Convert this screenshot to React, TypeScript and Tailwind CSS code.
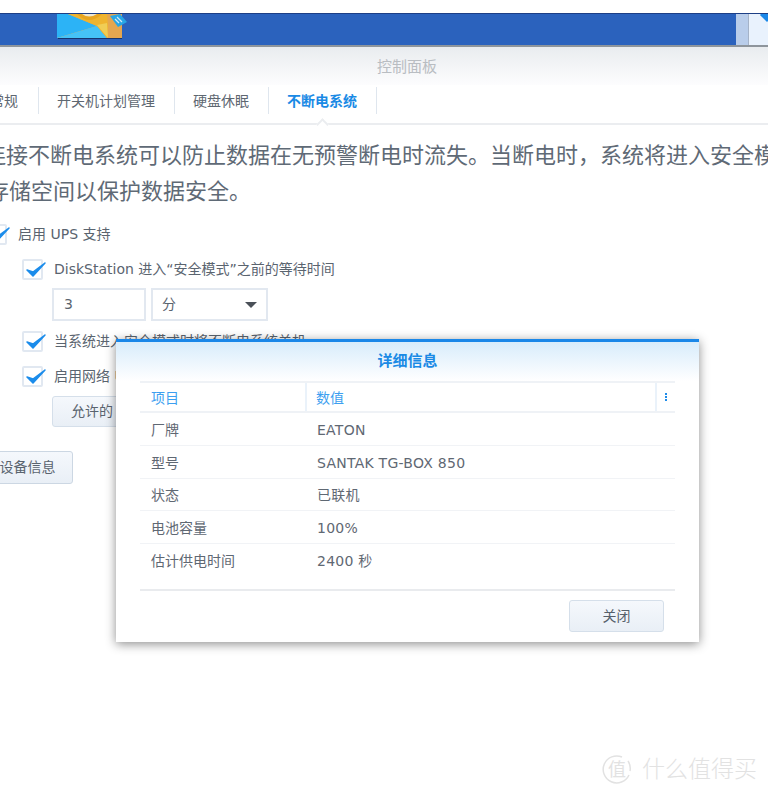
const FONT = "font-['DejaVu_Sans','Noto_Sans_CJK_SC',sans-serif]";

const ROWS = [
  ["厂牌", "EATON"],
  ["型号", "SANTAK TG-BOX 850"],
  ["状态", "已联机"],
  ["电池容量", "100%"],
  ["估计供电时间", "2400 秒"],
];

const TABS = ["常规", "开关机计划管理", "硬盘休眠", "不断电系统"];

function Check({ className = "" }: { className?: string }) {
  return (
    <div className={`relative h-[21px] w-[21px] shrink-0 rounded-[2px] border-2 border-[#e1e8f1] bg-white ${className}`}>
      <svg className="absolute -left-[1px] -top-[4px]" width="25" height="24" viewBox="0 0 25 24">
        <path d="M4 13 L10 19 L22 6 L10 15 Z" fill="#1b8ceb" stroke="#1b8ceb" strokeWidth="1.5" strokeLinejoin="round" />
      </svg>
    </div>
  );
}

function AppIcon() {
  return (
    <svg width="72" height="26" viewBox="0 0 72 26">
      <path d="M0 0 H65 V24 H0 Z" fill="#e4a650" />
      <path d="M0 0 H11 L40 12 L0 24 Z" fill="#2cb3f6" />
      <path d="M0 24 L40 12 L50 24 Z" fill="#45c2f7" />
      <path d="M11 0 H50 L51 12 L50 24 L40 12 Z" fill="#efb42f" />
      <path d="M40 11 L50 9 L51 24 Z" fill="#f0cd55" />
      <path d="M20 0 Q32 12 45 0 Z" fill="#e8a51f" />
      <path d="M25 0 Q32 5 40 0 Z" fill="#efe6cd" />
      <path d="M53 2 L63 0 L70 8 L61 13 Z" fill="#27a6e6" />
      <path d="M60 3 L65 8 M58 5 L62 9" stroke="#cfeafa" strokeWidth="1.2" />
      <path d="M1 24 H65 V25 H1 Z" fill="#16346f" />
    </svg>
  );
}

function Dialog() {
  return (
    <div className="absolute left-[116px] top-[339px] flex h-[303px] w-[583px] flex-col border-t-[3px] border-[#1a87e8] bg-white shadow-[0_2px_10px_rgba(0,0,0,0.45)]">
      <div className="flex h-[39px] items-center justify-center bg-gradient-to-b from-[#d8ecfb] to-white pb-[1px] text-[15px] font-bold text-[#1a8ae5]">
        详细信息
      </div>
      <div className="mx-[24px] flex-1 text-[14px] text-[#5f6873]">
        <div className="flex h-[32px] items-center border-y-2 border-[#eff2f6] text-[#3d9ff0]">
          <div className="h-full w-[167px] border-r-2 border-[#eaf2fa] pl-[11px] leading-[30px]">项目</div>
          <div className="h-full w-[350px] border-r-2 border-[#eaf2fa] pl-[9px] leading-[30px]">数值</div>
          <div className="flex flex-1 flex-col items-center gap-[1px]">
            <span className="h-[2px] w-[2px] bg-[#1f8ce9]" />
            <span className="h-[2px] w-[2px] bg-[#1f8ce9]" />
            <span className="h-[2px] w-[2px] bg-[#1f8ce9]" />
          </div>
        </div>
        {ROWS.map(([k, v]) => (
          <div key={k} className="flex h-[32.75px] items-center border-b border-[#f1f3f6] pt-[3px] last:border-b-0">
            <div className="w-[167px] pl-[11px]">{k}</div>
            <div className="pl-[10px] tracking-[0.25px]">{v}</div>
          </div>
        ))}
      </div>
      <div className="mx-[24px] flex h-[53px] justify-end border-t-2 border-[#e9ebee] pr-[11px] pt-[9px]">
        <button className="h-[32px] w-[95px] rounded-[3px] border border-[#d5dfea] bg-gradient-to-b from-[#f5f8fc] to-[#e9eff6] text-[14px] text-[#56606b]">
          关闭
        </button>
      </div>
    </div>
  );
}

export default function App() {
  return (
    <div className={`relative h-[795px] w-[768px] overflow-hidden bg-white ${FONT}`}>
      <div className="mt-[13px] flex h-[32px] border-t border-[#1d3f86] bg-[#2b62bd]">
        <div className="ml-[57px]">
          <AppIcon />
        </div>
        <div className="ml-auto flex h-full">
          <div className="w-[13px] border-r border-[#a5b3c8] bg-[#b9cdea]" />
          <div className="relative w-[19px] overflow-hidden bg-[#e9f2fd]">
            <div className="absolute -right-[4px] -top-[4px] h-[10px] w-[10px] rotate-45 bg-[#1a87e8]" />
          </div>
        </div>
      </div>

      <div className="h-[2px] bg-[#8e959c]" />
      <div className="flex h-[38px] items-center justify-center bg-gradient-to-b from-[#e9ecef] to-[#fdfdfe] pl-[46px] pt-[2px] text-[15px] text-[#b9bdc2]">
        控制面板
      </div>

      {/* tabs */}
      <div className="relative h-[38px] border-b-2 border-[#ebedf0]">
        <div className="-ml-[10px] mt-[2px] flex h-[27px] items-center text-[14px] text-[#5e6771]">
          {TABS.map((t, i) => (
            <div
              key={t}
              className={`flex h-full items-center border-r border-[#dfe6ee] pt-[1px] ${i === 0 ? "pr-[20px]" : "pl-[18px] pr-[19px]"} ${i === 3 ? "font-bold text-[#1a8ae5]" : ""}`}
            >
              {t}
            </div>
          ))}
        </div>
        <div className="absolute bottom-[-6px] left-[318px] h-[9px] w-[9px] rotate-45 border-l-2 border-t-2 border-[#ebedf0] bg-white" />
      </div>

      {/* body */}
      <div className="-ml-[16px] mt-[13px] w-[800px] whitespace-nowrap text-[22px] leading-[36px] text-[#5f6a76]">
        <div>连接不断电系统可以防止数据在无预警断电时流失。当断电时，系统将进入安全模</div>
        <div className="ml-[3px]">存储空间以保护数据安全。</div>
      </div>

      <div className="mt-[14px] text-[14px] text-[#5a646f]">
        <div className="-ml-[14px] flex h-[21px] items-center gap-[11px]">
          <Check />
          <span>启用 UPS 支持</span>
        </div>
        <div className="ml-[22px] mt-[14px] flex h-[21px] items-center gap-[11px]">
          <Check />
          <span>DiskStation 进入“安全模式”之前的等待时间</span>
        </div>
        <div className="ml-[52px] mt-[8px] flex gap-[5px]">
          <div className="flex h-[33px] w-[94px] items-center border-2 border-[#e2e8f0] pl-[10px]">3</div>
          <div className="flex h-[33px] w-[117px] items-center justify-between border-2 border-[#e2e8f0] pl-[9px] pr-[9px]">
            <span>分</span>
            <span className="h-0 w-0 border-x-[6px] border-t-[6px] border-x-transparent border-t-[#4a5058]" />
          </div>
        </div>
        <div className="ml-[22px] mt-[10px] flex h-[21px] items-center gap-[11px]">
          <Check />
          <span>当系统进入安全模式时将不断电系统关机</span>
        </div>
        <div className="ml-[22px] mt-[14px] flex h-[21px] items-center gap-[11px]">
          <Check />
          <span>启用网络 UPS 服务器</span>
        </div>
        <button className="ml-[52px] mt-[9px] flex h-[31px] w-[130px] items-center overflow-hidden whitespace-nowrap rounded-[3px] border border-[#d5dfea] bg-gradient-to-b from-[#f5f8fc] to-[#e9eff6] pl-[18px]">
          允许的 DiskStation
        </button>
        <button className="-ml-[20px] mt-[24px] h-[33px] w-[93px] rounded-[3px] border border-[#ccd7e3] bg-gradient-to-b from-[#f5f8fc] to-[#e9eff6] pl-[2px]">
          设备信息
        </button>
      </div>

      <Dialog />

      {/* watermark */}
      <div className="absolute left-[602px] top-[754px] flex items-center gap-[10px] text-[#e2e2e2]">
        <div className="relative flex h-[30px] w-[30px] items-center justify-center text-[18px]">
          值
          <svg className="absolute inset-0" width="30" height="30" viewBox="0 0 30 30" fill="none">
            <path d="M20 3 A13.5 13.5 0 1 0 27 21" stroke="#e2e2e2" strokeWidth="1.5" />
            <path d="M26 7 A13.5 13.5 0 0 1 28 17" stroke="#e2e2e2" strokeWidth="1.5" />
          </svg>
        </div>
        <span className="text-[23px] font-light leading-[30px]">什么值得买</span>
      </div>
    </div>
  );
}
